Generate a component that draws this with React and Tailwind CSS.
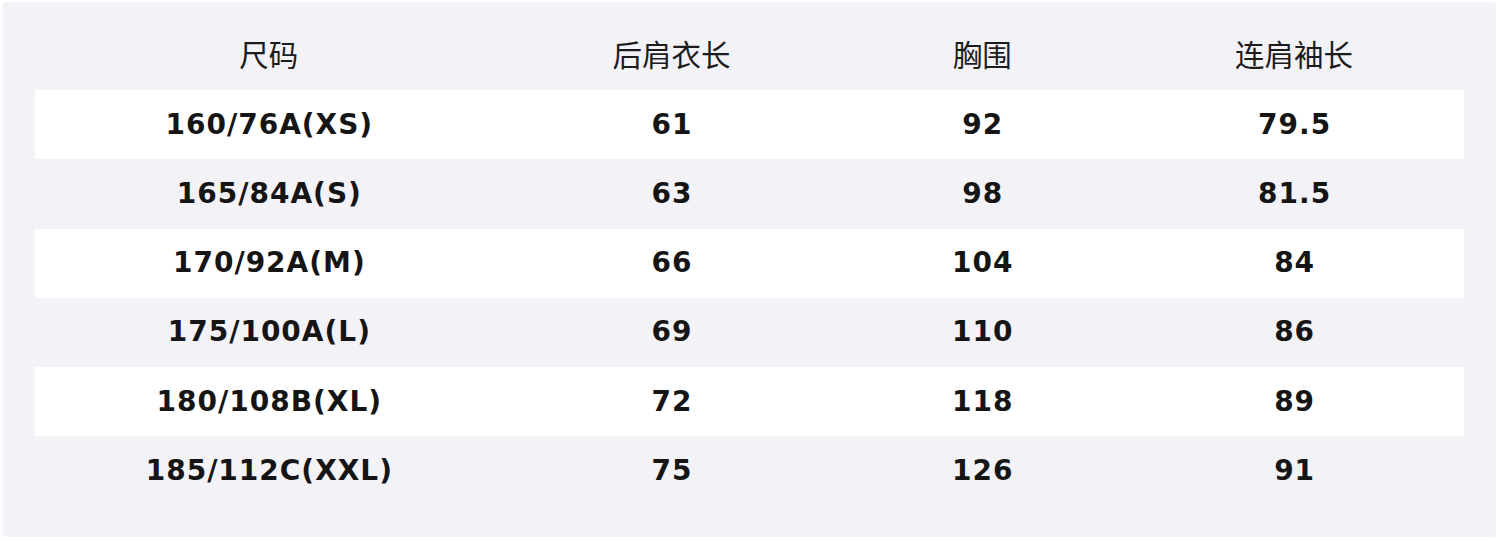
const rows = [
  ["160/76A(XS)", "61", "92", "79.5"],
  ["165/84A(S)", "63", "98", "81.5"],
  ["170/92A(M)", "66", "104", "84"],
  ["175/100A(L)", "69", "110", "86"],
  ["180/108B(XL)", "72", "118", "89"],
  ["185/112C(XXL)", "75", "126", "91"],
];
const heads = ["尺码", "后肩衣长", "胸围", "连肩袖长"];
const widths = ["w-[468px]", "w-[338px]", "w-[284px]", "w-[340px]"];

export default function App() {
  return (
    <div className="w-[1500px] h-[541px] bg-white pt-[2px] pl-[3px]">
      <div className="w-[1493px] h-[535px] bg-[#f3f2f7] rounded-[4px] pt-[18px] px-[32px]">
        <div className="flex h-[70px] items-center pb-[4px] text-[29.5px] text-[#1c1c1c]">
          {heads.map((h, i) => (
            <div key={i} className={`${widths[i]} text-center`} style={{ fontFamily: '"Noto Sans CJK SC", sans-serif' }}>{h}</div>
          ))}
        </div>
        {rows.map((r, ri) => (
          <div key={ri} className={`flex h-[69.25px] items-center ${ri % 2 === 0 ? "bg-white" : ""}`}>
            {r.map((c, ci) => (
              <div key={ci} className={`${widths[ci]} text-center text-[28px] font-bold text-[#151515] tracking-[1px] pl-[1px]`} style={{ fontFamily: '"DejaVu Sans", sans-serif' }}>{c}</div>
            ))}
          </div>
        ))}
      </div>
    </div>
  );
}
